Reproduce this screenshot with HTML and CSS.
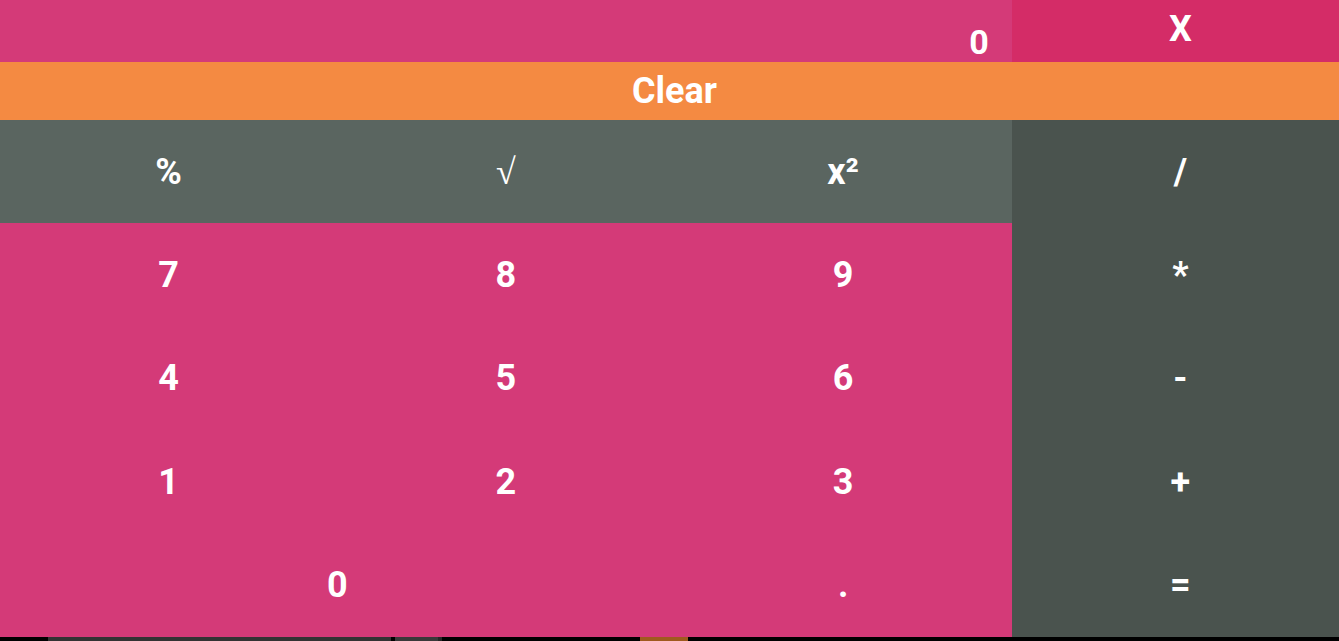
FILE: index.html
```html
<!DOCTYPE html>
<html lang="en">
<head>
<meta charset="utf-8">
<title>Calculator</title>
<link rel="stylesheet" href="styles.css">
</head>
<body>
<div class="calc">
  <div class="display"><span class="display-value">0</span></div>
  <button class="key close">X</button>
  <button class="key clear">Clear</button>
  <button class="key fn">%</button>
  <button class="key fn"><span class="root">√</span></button>
  <button class="key fn">x²</button>
  <button class="key op">/</button>
  <button class="key num">7</button>
  <button class="key num">8</button>
  <button class="key num">9</button>
  <button class="key op">*</button>
  <button class="key num">4</button>
  <button class="key num">5</button>
  <button class="key num">6</button>
  <button class="key op">-</button>
  <button class="key num">1</button>
  <button class="key num">2</button>
  <button class="key num">3</button>
  <button class="key op">+</button>
  <button class="key num zero">0</button>
  <button class="key num">.</button>
  <button class="key op">=</button>
</div>
<div class="taskbar">
  <div class="tb-gap tb-a"></div>
  <div class="tb-item tb-b"></div>
  <div class="tb-gap tb-c"></div>
  <div class="tb-item tb-d"></div>
  <div class="tb-edge"></div>
  <div class="tb-gap tb-e"></div>
  <div class="tb-accent"></div>
  <div class="tb-gap tb-f"></div>
</div>
</body>
</html>
```

FILE: styles.css
```css
html, body {
  margin: 0;
  padding: 0;
  overflow: hidden;
  background: #000;
}

body {
  width: 1339px;
  height: 641px;
  font-family: Roboto, "Liberation Sans", sans-serif;
}

.calc {
  width: 1349px;
  height: 637px;
  display: grid;
  grid-template-columns: repeat(4, 1fr);
  grid-template-rows: 62px 58px repeat(5, 1fr);
  background: #d43a78;
}

.key {
  border: 0;
  margin: 0;
  padding: 0;
  font-family: Roboto, "Liberation Sans", sans-serif;
  font-weight: 700;
  font-size: 36px;
  line-height: 1;
  color: #fff;
  display: flex;
  align-items: center;
  justify-content: center;
  background: transparent;
}

.display {
  grid-column: 1 / 4;
  background: #d43a78;
  display: flex;
  justify-content: flex-end;
  align-items: flex-end;
  padding: 0 23px 3px 0;
}

.display-value {
  color: #fff;
  font-weight: 700;
  font-size: 34px;
  line-height: 1;
}

.close {
  background: #d42c67;
  align-items: flex-start;
  padding-top: 11px;
}

.clear {
  grid-column: 1 / 5;
  background: #f48a42;
}

.fn {
  background: #5a6560;
}

.root {
  font-family: "Liberation Serif", serif;
  font-weight: 400;
}

.op {
  background: #4a534e;
}

.num {
  background: #d43a78;
}

.zero {
  grid-column: 1 / 3;
}

.taskbar {
  height: 4px;
  display: flex;
  background: #000;
}

.tb-a { width: 48px; }
.tb-b { width: 343px; background: #333333; }
.tb-c { width: 4px; }
.tb-d { width: 43px; background: #393939; }
.tb-edge { width: 4px; background: #262626; }
.tb-e { width: 198px; }
.tb-accent { width: 48px; background: #a05a1e; }
.tb-f { flex: 1; }
```
